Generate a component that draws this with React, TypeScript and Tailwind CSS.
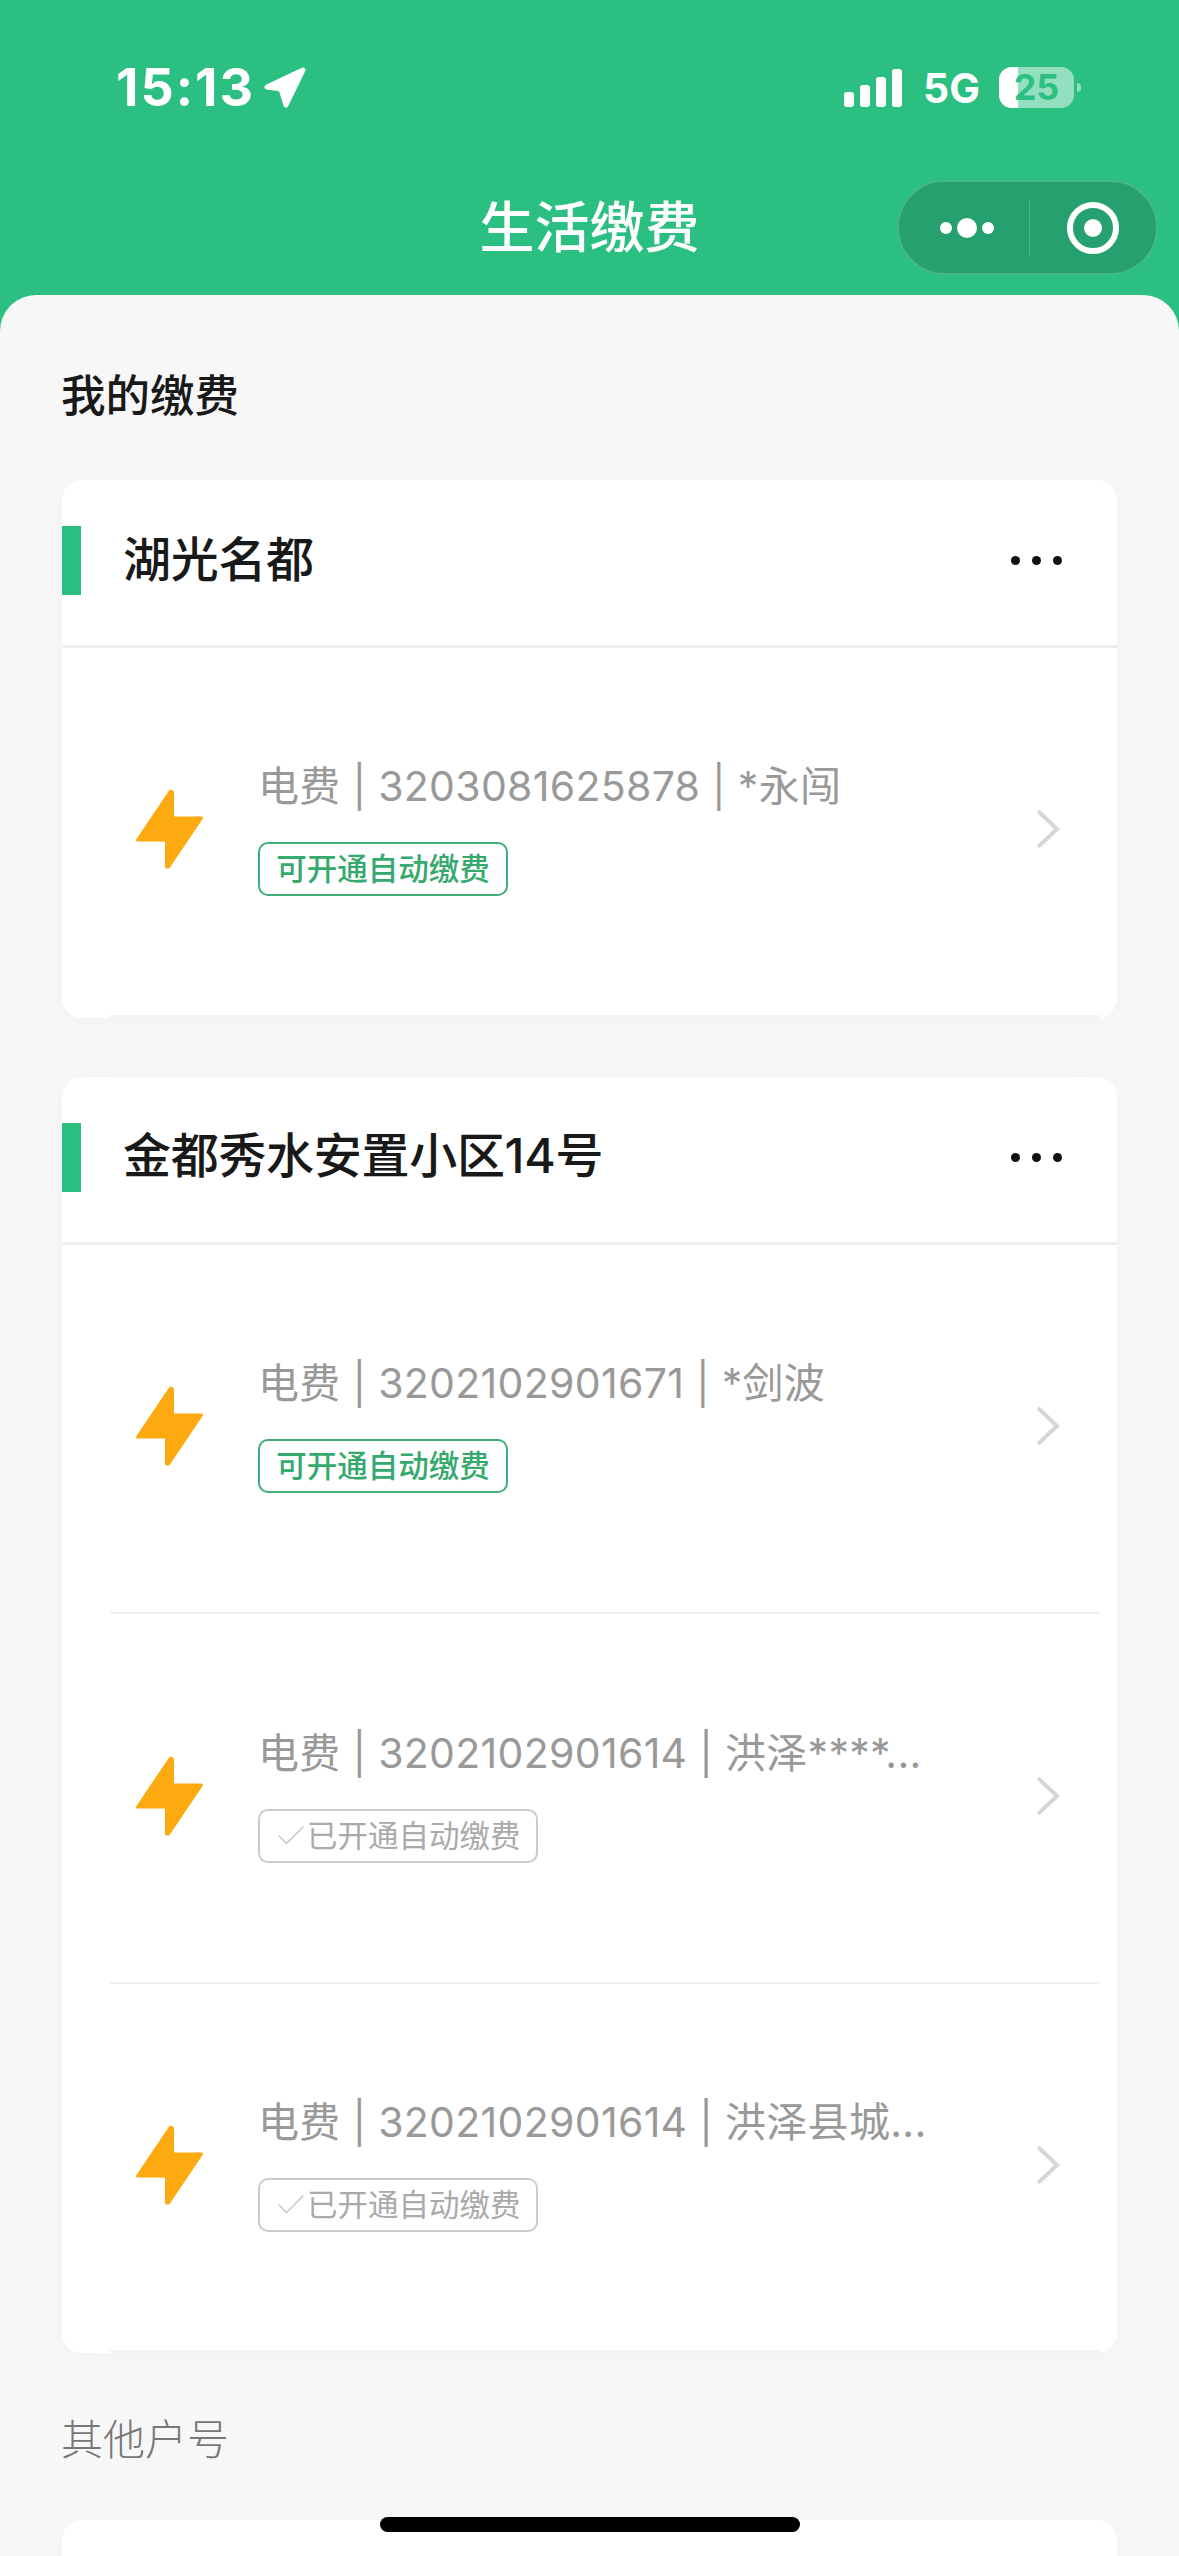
import { Check } from "lucide-react";

type Account = {
  text: string;
  enabled: boolean;
};

const homes: { name: string; accounts: Account[] }[] = [
  {
    name: "湖光名都",
    accounts: [{ text: "电费 | 3203081625878 | *永闯", enabled: false }],
  },
  {
    name: "金都秀水安置小区14号",
    accounts: [
      { text: "电费 | 3202102901671 | *剑波", enabled: false },
      { text: "电费 | 3202102901614 | 洪泽****...", enabled: true },
      { text: "电费 | 3202102901614 | 洪泽县城...", enabled: true },
    ],
  },
];

function Bolt() {
  return (
    <svg width="69" height="80" viewBox="0 0 68 80" className="shrink-0">
      <polygon
        points="35,2 37,3 37,29 66,29 33,78 31,78 31,51 2,51"
        fill="#fcaa0f"
        stroke="#fcaa0f"
        strokeWidth="3"
        strokeLinejoin="round"
      />
    </svg>
  );
}

function Chevron() {
  return (
    <svg width="24" height="40" viewBox="0 0 24 40" className="shrink-0" fill="none">
      <path d="M2 2 L21 20 L2 38" stroke="#d6d6d6" strokeWidth="4" />
    </svg>
  );
}

function StatusBar() {
  return (
    <div className="h-[180px] flex justify-between pl-[116px] pr-[98px] pt-[60px] text-white">
      <div className="flex items-start gap-[9px]">
        <span className="text-[52px] leading-[56px] font-bold tracking-[2px]">15:13</span>
        <svg width="42" height="42" viewBox="0 0 42 42" className="mt-[7px]">
          <path
            d="M3 20 L39 3 L22 38 L17 22 Z"
            fill="#fff"
            stroke="#fff"
            strokeWidth="5"
            strokeLinejoin="round"
          />
        </svg>
      </div>
      <div className="flex items-start">
        <svg width="58" height="38" viewBox="0 0 58 38" className="mt-[9px]" fill="#fff">
          <rect x="0" y="23" width="10" height="15" rx="3" />
          <rect x="16" y="16" width="10" height="22" rx="3" />
          <rect x="32" y="8" width="10" height="30" rx="3" />
          <rect x="48" y="0" width="10" height="38" rx="3" />
        </svg>
        <span className="ml-[21px] text-[41px] leading-[56px] font-bold">5G</span>
        <div className="ml-[19px] mt-[7px] relative w-[75px] h-[41px] rounded-[13px] bg-white/50 flex items-center justify-center">
          <div className="absolute left-0 top-0 bottom-0 w-[19px] rounded-l-[13px] bg-white" />
          <span className="relative text-[36px] leading-[41px] font-bold text-[#2bbf82]">25</span>
        </div>
        <div className="ml-[3px] mt-[23px] w-[4px] h-[9px] rounded-r-full bg-white/50" />
      </div>
    </div>
  );
}

function NavBar() {
  return (
    <div className="h-[115px] grid grid-cols-[1fr_auto_1fr]">
      <div />
      <h1 className="text-[55px] leading-[95px] font-medium text-white">生活缴费</h1>
      <div className="flex justify-end pr-[21px]">
        <div className="w-[261px] h-[95px] rounded-full bg-[#26a06f] border-2 border-[#45b886] flex items-center">
          <div className="w-[130px] flex items-center justify-center gap-[5px] pl-[6px]">
            <span className="w-[12px] h-[12px] rounded-full bg-white" />
            <span className="w-[20px] h-[20px] rounded-full bg-white" />
            <span className="w-[12px] h-[12px] rounded-full bg-white" />
          </div>
          <div className="w-[1px] h-[56px] bg-[#4eb78d]" />
          <div className="flex-1 flex items-center justify-center">
            <div className="w-[52px] h-[52px] rounded-full border-[6px] border-white flex items-center justify-center">
              <div className="w-[18px] h-[18px] rounded-full bg-white" />
            </div>
          </div>
        </div>
      </div>
    </div>
  );
}

function AccountRow({ account, last }: { account: Account; last: boolean }) {
  return (
    <div
      className={
        last
          ? "h-[369.5px] ml-[48px] mr-[17px] pl-[25px] pr-[40px] pb-[4px] flex items-center border-b-[3px] border-[#f3f4f8]"
          : "h-[369.5px] ml-[48px] mr-[17px] pl-[25px] pr-[40px] pb-[4px] flex items-center border-b-2 border-[#f1f1f1]"
      }
    >
      <Bolt />
      <div className="ml-[54px] flex-1 pb-[6px]">
        <div className="text-[41px] leading-[60px] tracking-[0.3px] text-[#999999] whitespace-nowrap">
          {account.text}
        </div>
        {account.enabled ? (
          <div className="mt-[26px] w-[280px] h-[54px] rounded-[10px] border-2 border-[#cccccc] flex items-center pl-[13px] text-[30.5px] leading-[50px] text-[#aaaaaa]">
            <Check size={36} strokeWidth={0.9} className="text-[#c4c4c4] shrink-0 -mr-[2px]" />
            已开通自动缴费
          </div>
        ) : (
          <div className="mt-[26px] w-[250px] h-[54px] rounded-[10px] border-2 border-[#3fae78] flex items-center justify-center text-[30.5px] leading-[50px] font-medium text-[#36a96e]">
            可开通自动缴费
          </div>
        )}
      </div>
      <Chevron />
    </div>
  );
}

function HomeCard({ name, accounts }: { name: string; accounts: Account[] }) {
  return (
    <section className="rounded-[20px] bg-white shadow-[0_4px_30px_rgba(0,0,0,0.025)]">
      <div className="h-[168px] flex items-center border-b-[3px] border-[#eeeeee] pr-[55px] pb-[4px]">
        <div className="w-[19px] h-[69px] bg-[#2bbf82]" />
        <h2 className="ml-[42px] flex-1 text-[48px] leading-[64px] tracking-[-0.3px] -mt-[2px] font-medium text-[#191919]">
          {name}
        </h2>
        <div className="flex gap-[12px]">
          <span className="w-[9px] h-[9px] rounded-full bg-[#111111]" />
          <span className="w-[9px] h-[9px] rounded-full bg-[#111111]" />
          <span className="w-[9px] h-[9px] rounded-full bg-[#111111]" />
        </div>
      </div>
      {accounts.map((account, i) => (
        <AccountRow key={i} account={account} last={i === accounts.length - 1} />
      ))}
    </section>
  );
}

export default function App() {
  return (
    <div className="relative w-[1179px] h-[2556px] overflow-hidden bg-[#2bbf82] font-['Inter','Noto_Sans_CJK_SC',sans-serif]">
      <StatusBar />
      <NavBar />
      <main className="h-[2261px] rounded-t-[36px] bg-[#f7f7f7] px-[62px] pt-[71px]">
        <h3 className="-ml-[1px] text-[44.5px] leading-[60px] font-medium text-[#191919] mb-[54px]">我的缴费</h3>
        <div className="flex flex-col gap-[59px]">
          {homes.map((home) => (
            <HomeCard key={home.name} name={home.name} accounts={home.accounts} />
          ))}
        </div>
        <h3 className="-ml-[1px] mt-[57px] mb-[50px] text-[42px] leading-[60px] font-light text-[#777777]">其他户号</h3>
        <section className="h-[400px] rounded-[20px] bg-white shadow-[0_4px_30px_rgba(0,0,0,0.025)]" />
      </main>
      {/* home indicator sits over the page */}
      <div className="absolute left-[380px] top-[2517px] w-[420px] h-[15px] rounded-full bg-black" />
    </div>
  );
}
